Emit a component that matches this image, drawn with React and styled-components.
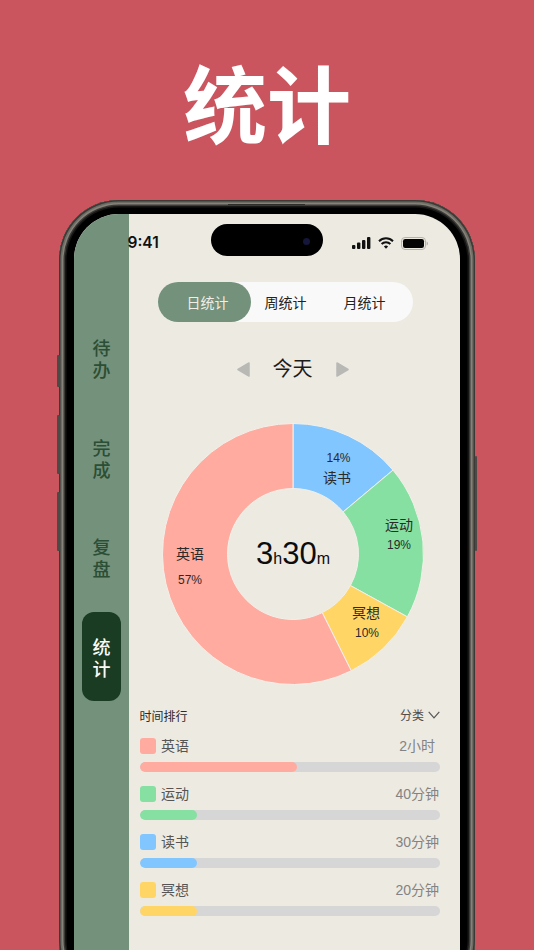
import React from 'react'
import styled, { createGlobalStyle } from 'styled-components'

const FONT = `"Liberation Sans", "Noto Sans CJK SC", sans-serif`
const SAGE = '#74917b'
const PAPER = '#edeae2'

const GlobalStyle = createGlobalStyle`
  html, body {
    margin: 0;
    padding: 0;
    background: #cb555f;
  }
  * {
    box-sizing: border-box;
  }
`

const Page = styled.div`
  width: 534px;
  height: 950px;
  overflow: hidden;
  background: #cb555f;
  font-family: ${FONT};
  display: flex;
  flex-direction: column;
  align-items: center;
`

const Headline = styled.h1`
  margin: 0;
  height: 200px;
  flex: none;
  display: flex;
  align-items: center;
  justify-content: center;
  color: #fff;
  font-family: "Noto Sans CJK SC", sans-serif;
  font-size: 84px;
  font-weight: 700;
  letter-spacing: 0;
`

const Phone = styled.div`
  position: relative;
  flex: none;
  width: 416px;
  height: 800px;
  padding: 14px 15px 0;
  border-radius: 60px;
  background: #000;
  box-shadow:
    inset 0 0 0 1.5px #3b3a36,
    inset 0 0 0 3px #6e6b63,
    inset 0 0 0 4.5px #85827a,
    inset 0 0 0 6px #3a3936,
    inset 0 0 0 7.5px #161615;

  &::before {
    content: '';
    position: absolute;
    top: 4px;
    left: 169px;
    width: 77px;
    height: 1px;
    background: #2e2d2b;
  }
`

const SideKey = styled.span`
  position: absolute;
  top: ${p => p.$top}px;
  ${p => (p.$right ? 'right: -2px;' : 'left: -2px;')}
  width: 2.5px;
  height: ${p => p.$height}px;
  background: #4b4a46;
  border-radius: 1px;
`

const Screen = styled.div`
  position: relative;
  display: flex;
  height: 100%;
  border-radius: 45px 45px 0 0;
  overflow: hidden;
  background: ${PAPER};
`

const Island = styled.div`
  position: absolute;
  top: 10px;
  left: 137px;
  width: 112px;
  height: 32px;
  border-radius: 16px;
  background: #000;
`

const Lens = styled.span`
  position: absolute;
  top: 13.5px;
  right: 13.5px;
  width: 7px;
  height: 7px;
  border-radius: 50%;
  background: #14163a;
`

const Sidebar = styled.nav`
  flex: none;
  width: 54.5px;
  padding: 99.5px 7.5px 0 8px;
  display: flex;
  flex-direction: column;
  gap: 10.5px;
  background: ${SAGE};
`

const SideTab = styled.div`
  height: 89px;
  border-radius: 12px;
  display: flex;
  align-items: center;
  justify-content: center;
  background: ${p => (p.$active ? '#193c22' : 'transparent')};
`

const SideLabel = styled.span`
  width: 18px;
  font-family: "Noto Sans CJK SC", sans-serif;
  font-size: 18px;
  line-height: 22px;
  font-weight: 500;
  text-align: center;
  color: ${p => (p.$active ? '#fbfaf6' : '#2b4e34')};
`

const Main = styled.main`
  flex: 1;
  min-width: 0;
  display: flex;
  flex-direction: column;
`

const StatusBar = styled.div`
  height: 68px;
  flex: none;
  padding: 19px 32px 0 0;
  display: flex;
  align-items: flex-start;
  justify-content: space-between;
`

const Clock = styled.span`
  margin-left: -1px;
  font-family: Inter, sans-serif;
  font-size: 15.5px;
  line-height: 20px;
  font-weight: 600;
  color: #111;
`

const StatusIcons = styled.div`
  height: 20px;
  display: flex;
  align-items: center;
  gap: 7px;
`

const Segmented = styled.div`
  flex: none;
  width: 255px;
  height: 40px;
  margin-left: 29.5px;
  border-radius: 20px;
  background: #f9f9f9;
  display: grid;
  grid-template-columns: 93px 69px 1fr;
`

const Segment = styled.div`
  border-radius: 20px;
  display: flex;
  align-items: center;
  justify-content: center;
  padding-left: ${p => (p.$active ? '6px' : '0')};
  padding-right: ${p => (p.$last ? '4px' : '0')};
  font-size: 14px;
  color: ${p => (p.$active ? '#f1eee6' : '#222')};
  background: ${p => (p.$active ? SAGE : 'transparent')};
`

const DateNav = styled.div`
  flex: none;
  height: 30px;
  margin: 32px 0 38.5px;
  padding-left: 108px;
  display: flex;
  align-items: center;
  gap: 23px;
`

const DateLabel = styled.span`
  width: 40px;
  font-size: 20px;
  line-height: 30px;
  color: #1c1c1c;
`

const ChartWrap = styled.div`
  position: relative;
  flex: none;
  width: 262px;
  height: 262px;
  margin-left: 33.5px;
`

const ChartName = styled.text`
  font-size: 14px;
  fill: #2a2a2a;
  text-anchor: middle;
  dominant-baseline: central;
`

const ChartPercent = styled.text`
  font-size: 12px;
  fill: #2a2a2a;
  text-anchor: middle;
  dominant-baseline: central;
`

const Total = styled.div`
  position: absolute;
  inset: 0;
  padding-top: 6px;
  display: flex;
  align-items: center;
  justify-content: center;
`

const TotalText = styled.div`
  font-size: 31px;
  line-height: 36px;
  color: #0c0c0c;
`

const TotalUnit = styled.span`
  font-size: 16px;
`

const Ranking = styled.section`
  margin-top: 23.5px;
  padding: 0 20px 0 11px;
`

const RankingHead = styled.div`
  height: 17px;
  margin-bottom: 13px;
  padding-bottom: 2px;
  display: flex;
  align-items: center;
  justify-content: space-between;
  font-size: 12px;
  color: #2b2b2b;
`

const Filter = styled.div`
  display: flex;
  align-items: center;
  gap: 4px;
  margin-top: -2px;
  color: #4d4d4d;
`

const Row = styled.div`
  margin-bottom: 14px;
`

const RowHead = styled.div`
  height: 16px;
  margin-bottom: 8px;
  display: flex;
  align-items: center;
  font-size: 14px;
`

const Swatch = styled.span`
  width: 16px;
  height: 16px;
  margin-right: 5.5px;
  border-radius: 3px;
  background: ${p => p.$color};
`

const RowName = styled.span`
  margin-top: -2px;
  color: #555;
`

const RowValue = styled.span`
  margin: -2px 0 0 auto;
  padding-right: ${p => p.$inset}px;
  color: #838383;
`

const Track = styled.div`
  height: 10px;
  border-radius: 5px;
  background: #d6d6d6;
  overflow: hidden;
`

const Fill = styled.div`
  height: 100%;
  border-radius: 5px;
  background: ${p => p.$color};
`

const tabs = ['待办', '完成', '复盘', '统计']

const slices = [
  { color: '#82c6ff', from: 0, to: 50 },
  { color: '#86e0a1', from: 50, to: 118.8 },
  { color: '#ffd666', from: 118.8, to: 153.5 },
  { color: '#ffaba0', from: 153.5, to: 360 }
]

const labels = [
  { name: '读书', nx: 175, ny: 54.5, pct: '14%', px: 176.5, py: 34.5 },
  { name: '运动', nx: 237, ny: 101.5, pct: '19%', px: 237, py: 121.5 },
  { name: '冥想', nx: 204, ny: 189.5, pct: '10%', px: 205, py: 209.5 },
  { name: '英语', nx: 28, ny: 130.5, pct: '57%', px: 28, py: 156.5 }
]

const rows = [
  { name: '英语', value: '2小时', color: '#ffaba0', width: 157, inset: 5 },
  { name: '运动', value: '40分钟', color: '#86e0a1', width: 57, inset: 1 },
  { name: '读书', value: '30分钟', color: '#82c6ff', width: 57, inset: 1 },
  { name: '冥想', value: '20分钟', color: '#ffd666', width: 57, inset: 1 }
]

function point(r, deg) {
  const a = (deg * Math.PI) / 180
  return `${(131 + r * Math.sin(a)).toFixed(2)} ${(131 - r * Math.cos(a)).toFixed(2)}`
}

function slicePath(from, to) {
  const large = to - from > 180 ? 1 : 0
  return [
    `M${point(130.5, from)}`,
    `A130.5 130.5 0 ${large} 1 ${point(130.5, to)}`,
    `L${point(65.5, to)}`,
    `A65.5 65.5 0 ${large} 0 ${point(65.5, from)}`,
    'Z'
  ].join(' ')
}

function SignalIcon() {
  return (
    <svg width="19" height="12" viewBox="0 0 19 12">
      <rect x="0" y="8" width="3.4" height="4" rx="1" fill="#111" />
      <rect x="5" y="5.5" width="3.4" height="6.5" rx="1" fill="#111" />
      <rect x="10" y="3" width="3.4" height="9" rx="1" fill="#111" />
      <rect x="15" y="0" width="3.4" height="12" rx="1" fill="#111" />
    </svg>
  )
}

function WifiIcon() {
  return (
    <svg width="16" height="12" viewBox="0 0 16 12" fill="none" stroke="#111" strokeWidth="2">
      <path d="M1 4.2a10 10 0 0 1 14 0" />
      <path d="M3.6 7a6.2 6.2 0 0 1 8.8 0" />
      <path d="M8 11.8 5.9 9.5a3 3 0 0 1 4.2 0Z" fill="#111" stroke="none" />
    </svg>
  )
}

function BatteryIcon() {
  return (
    <svg width="27" height="13" viewBox="0 0 27 13">
      <rect x="0.5" y="0.5" width="24" height="12" rx="3.5" fill="none" stroke="#b4b3ad" />
      <rect x="2" y="2" width="21" height="9" rx="2.2" fill="#050505" />
      <path d="M25.6 4.5c.9.3 1.4 1 1.4 2s-.5 1.700-1.400 2Z" fill="#b4b3ad" />
    </svg>
  )
}

function ArrowIcon({ right }) {
  return (
    <svg width="13" height="15" viewBox="0 0 13 15">
      <path
        d={right ? 'M1 1 12 7.500 1 14Z' : 'M12 1 1 7.500 12 14Z'}
        fill="#b8b8b5"
        stroke="#b8b8b5"
        strokeWidth="1.500"
        strokeLinejoin="round"
      />
    </svg>
  )
}

function ChevronIcon() {
  return (
    <svg width="12" height="8" viewBox="0 0 12 8" fill="none">
      <path d="M.7.9 6 6.800 11.300.9" stroke="#555" strokeWidth="1.200" />
    </svg>
  )
}

function Donut() {
  return (
    <ChartWrap>
      <svg width="262" height="262" viewBox="0 0 262 262">
        {slices.map(s => (
          <path key={s.color} d={slicePath(s.from, s.to)} fill={s.color} stroke="#f3f0e9" strokeWidth="1" />
        ))}
        {labels.map(l => (
          <g key={l.name}>
            <ChartName x={l.nx} y={l.ny}>{l.name}</ChartName>
            <ChartPercent x={l.px} y={l.py}>{l.pct}</ChartPercent>
          </g>
        ))}
      </svg>
      <Total>
        <TotalText>
          3<TotalUnit>h</TotalUnit>30<TotalUnit>m</TotalUnit>
        </TotalText>
      </Total>
    </ChartWrap>
  )
}

export default function App() {
  return (
    <Page>
      <GlobalStyle />
      <Headline>统计</Headline>
      <Phone>
        <SideKey $top={155} $height={32} />
        <SideKey $top={215} $height={59} />
        <SideKey $top={292} $height={59} />
        <SideKey $right $top={256} $height={95} />
        <Screen>
          <Sidebar>
            {tabs.map((label, i) => (
              <SideTab key={label} $active={i === 3}>
                <SideLabel $active={i === 3}>{label}</SideLabel>
              </SideTab>
            ))}
          </Sidebar>
          <Main>
            <StatusBar>
              <Clock>9:41</Clock>
              <StatusIcons>
                <SignalIcon />
                <WifiIcon />
                <BatteryIcon />
              </StatusIcons>
            </StatusBar>
            <Segmented>
              <Segment $active>日统计</Segment>
              <Segment>周统计</Segment>
              <Segment $last>月统计</Segment>
            </Segmented>
            <DateNav>
              <ArrowIcon />
              <DateLabel>今天</DateLabel>
              <ArrowIcon right />
            </DateNav>
            <Donut />
            <Ranking>
              <RankingHead>
                <span>时间排行</span>
                <Filter>
                  <span>分类</span>
                  <ChevronIcon />
                </Filter>
              </RankingHead>
              {rows.map(r => (
                <Row key={r.name}>
                  <RowHead>
                    <Swatch $color={r.color} />
                    <RowName>{r.name}</RowName>
                    <RowValue $inset={r.inset}>{r.value}</RowValue>
                  </RowHead>
                  <Track>
                    <Fill $color={r.color} style={{ width: r.width }} />
                  </Track>
                </Row>
              ))}
            </Ranking>
          </Main>
          <Island>
            <Lens />
          </Island>
        </Screen>
      </Phone>
    </Page>
  )
}
